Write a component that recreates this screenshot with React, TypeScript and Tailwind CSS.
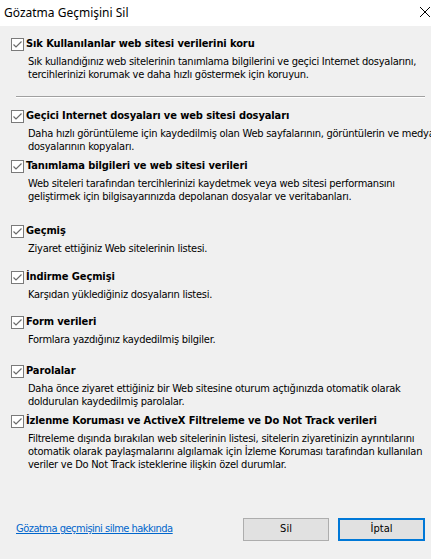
import React from "react";

const items = [
  {
    title: "Sık Kullanılanlar web sitesi verilerini koru",
    desc: ["Sık kullandığınız web sitelerinin tanımlama bilgilerini ve geçici Internet dosyalarını,", "tercihlerinizi korumak ve daha hızlı göstermek için koruyun."],
    mt: "mt-[10px]",
  },
  {
    title: "Geçici Internet dosyaları ve web sitesi dosyaları",
    desc: ["Daha hızlı görüntüleme için kaydedilmiş olan Web sayfalarının, görüntülerin ve medya", "dosyalarının kopyaları."],
    mt: "mt-[10px]",
  },
  {
    title: "Tanımlama bilgileri ve web sitesi verileri",
    desc: ["Web siteleri tarafından tercihlerinizi kaydetmek veya web sitesi performansını", "geliştirmek için bilgisayarınızda depolanan dosyalar ve veritabanları."],
    mt: "mt-[5px]",
  },
  { title: "Geçmiş", desc: ["Ziyaret ettiğiniz Web sitelerinin listesi."], mt: "mt-[20px]" },
  { title: "İndirme Geçmişi", desc: ["Karşıdan yüklediğiniz dosyaların listesi."], mt: "mt-[14px]" },
  { title: "Form verileri", desc: ["Formlara yazdığınız kaydedilmiş bilgiler."], mt: "mt-[13px]" },
  {
    title: "Parolalar",
    desc: ["Daha önce ziyaret ettiğiniz bir Web sitesine oturum açtığınızda otomatik olarak", "doldurulan kaydedilmiş parolalar."],
    mt: "mt-[17px]",
  },
  {
    title: "İzlenme Koruması ve ActiveX Filtreleme ve Do Not Track verileri",
    desc: [
      "Filtreleme dışında bırakılan web sitelerinin listesi, sitelerin ziyaretinizin ayrıntılarını",
      "otomatik olarak paylaşmalarını algılamak için İzleme Koruması tarafından kullanılan",
      "veriler ve Do Not Track isteklerine ilişkin özel durumlar.",
    ],
    mt: "mt-[5px]",
  },
];

function CheckBox() {
  return (
    <span className="flex h-[13px] w-[13px] shrink-0 items-center justify-center border border-[#7a7a7a] bg-white">
      <svg width="11" height="11" viewBox="0 0 11 11">
        <path d="M1.5 5.5 L4 8 L9.5 2.5" fill="none" stroke="#6b6b6b" strokeWidth="1.2" />
      </svg>
    </span>
  );
}

function Item({ title, desc, mt, first }: { title: string; desc: string[]; mt: string; first?: boolean }) {
  return (
    <div className={mt}>
      <div className="flex h-[16px] items-center gap-[2px] pl-[11px]">
        <CheckBox />
        <span className="text-[11px] font-bold leading-[16px] tracking-[-0.1px] text-black">{title}</span>
      </div>
      <div className="mt-[3px] pl-[28px] text-[11px] leading-[13px] tracking-[-0.25px] text-black">
        {desc.map((d, i) => (
          <div key={i} className="whitespace-nowrap">{d}</div>
        ))}
      </div>
      {first && (
        <div className="ml-[16px] mr-[6px] mt-[15px] border-t border-b border-t-[#a0a0a0] border-b-white" />
      )}
    </div>
  );
}

export default function App() {
  return (
    <div
      className="flex h-[559px] w-[431px] flex-col overflow-hidden bg-[#f0f0f0]"
      style={{ fontFamily: '"DejaVu Sans Condensed", "DejaVu Sans", sans-serif' }}
    >
      <div className="flex h-[26px] shrink-0 items-center justify-between bg-white pl-[4px]">
        <span className="text-[12px] text-black [font-family:'Noto_Sans',sans-serif]">Gözatma Geçmişini Sil</span>
        <svg width="12" height="12" viewBox="0 0 12 12" className="-mt-[2px]">
          <path d="M1 1 L11 11 M11 1 L1 11" stroke="#000" strokeWidth="1" />
        </svg>
      </div>
      <div>
        {items.map((it, i) => (
          <Item key={i} title={it.title} desc={it.desc} mt={it.mt} first={i === 0} />
        ))}
      </div>
      <div className="mt-auto mb-[18px] flex items-center pl-[16px] pr-[6px]">
        <a href="#" className="flex-1 text-[11px] tracking-[-0.5px] text-[#0066cc] underline">Gözatma geçmişini silme hakkında</a>
        <button className="h-[23px] w-[86px] border border-[#adadad] bg-[#e1e1e1] text-[11px] text-black">Sil</button>
        <button className="ml-[9px] h-[23px] w-[87px] border-2 border-[#0078d7] bg-[#e1e1e1] text-[11px] text-black">İptal</button>
      </div>
    </div>
  );
}
